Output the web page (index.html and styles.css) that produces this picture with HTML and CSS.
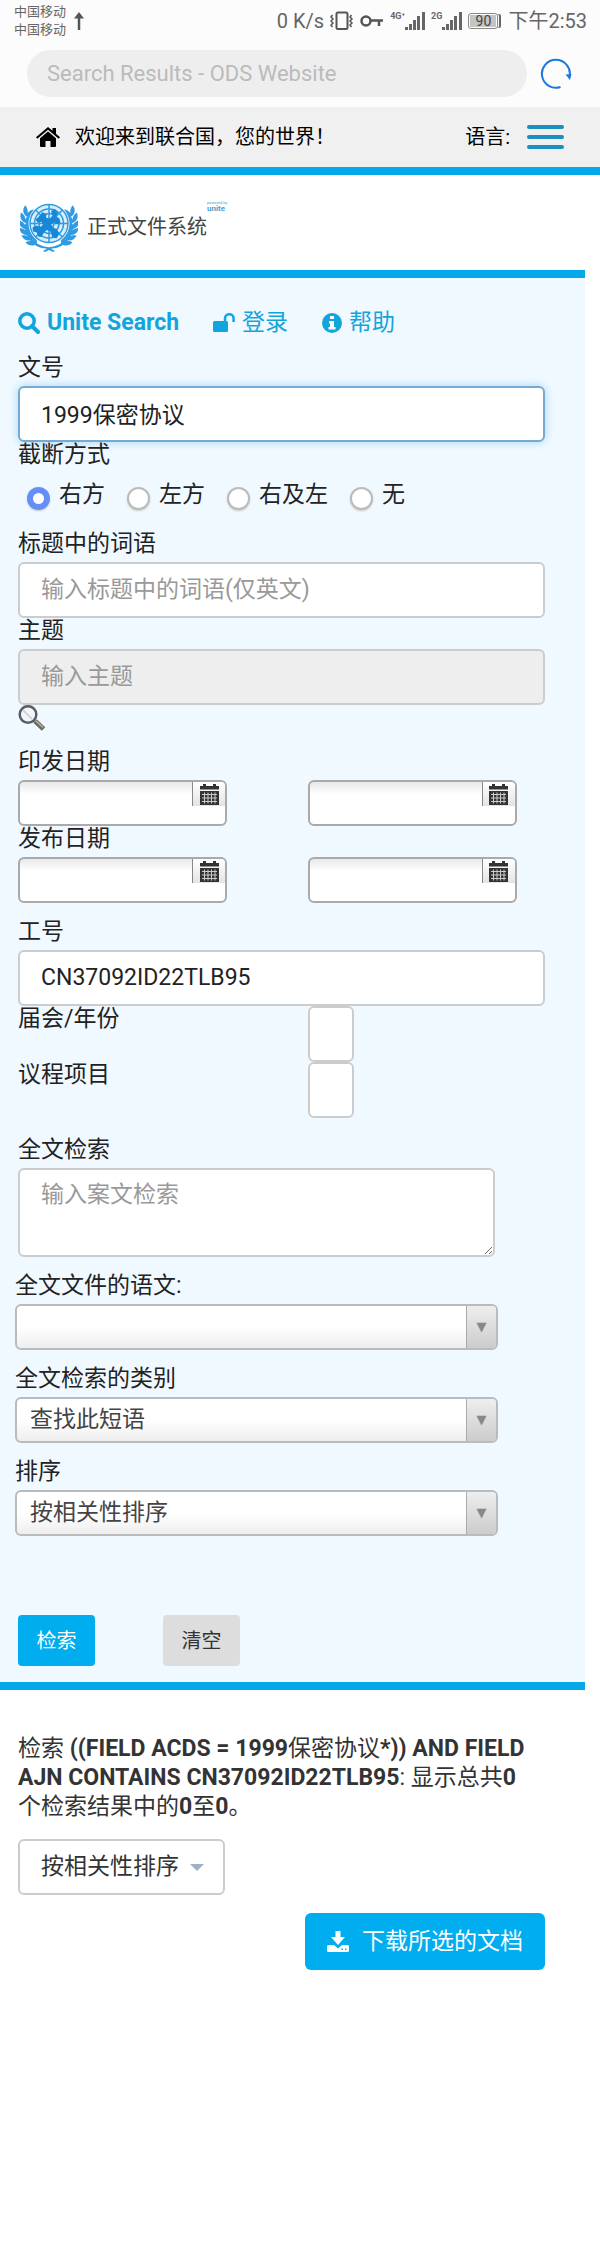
FILE: index.html
```html
<!DOCTYPE html>
<html lang="zh-CN">
<head>
    <meta charset="utf-8">
    <meta name="viewport" content="width=device-width, initial-scale=1">
    <title>Search Results - ODS Website</title>
    <link rel="stylesheet" href="styles.css">
</head>
<body>
    <div class="status-bar">
        <div class="carrier"><span>中国移动</span><span>中国移动</span></div>
        <svg class="up" width="10" height="18" viewBox="0 0 10 18"><path d="M5 18V3" fill="none" stroke="#555" stroke-width="2.500"/><path d="M5 0l5 6.500H0z" fill="#555"/></svg>
        <span class="speed">0 K/s</span>
        <svg width="24" height="20" viewBox="0 0 24 20" fill="none" stroke="#555"><rect x="6.500" y="1.500" width="11" height="16.500" rx="1.500" stroke-width="2"/><path d="M2.500 4l-1.500 2 2 2-2 2 2 2-2 2 1.500 2M21.500 4l-1.500 2 2 2-2 2 2 2-2 2 1.500 2" stroke-width="1.500"/></svg>
        <svg width="24" height="14" viewBox="0 0 24 14" fill="none" stroke="#555" stroke-width="2.500"><circle cx="6" cy="7" r="4.500"/><path d="M10.500 6.500H23M19 7v5"/></svg>
        <div class="signal">
            <span class="net">4G⁺</span>
            <svg width="20" height="18" viewBox="0 0 20 18" fill="#666"><path d="M0 15h3v3H0zM4 12h3v6H4zM8 8h3v10H8zM12 4h3v14h-3zM17 0h3v18h-3z"/></svg>
        </div>
        <div class="signal">
            <span class="net">2G</span>
            <svg width="20" height="18" viewBox="0 0 20 18" fill="#666"><path d="M0 15h3v3H0zM4 12h3v6H4zM8 8h3v10H8zM12 4h3v14h-3zM17 0h3v18h-3z"/></svg>
        </div>
        <div class="battery"><span>90</span></div>
        <span class="time">下午2:53</span>
    </div>

    <div class="address-bar">
        <input class="address" type="text" placeholder="Search Results - ODS Website" aria-label="Address">
        <button class="reload" type="button" aria-label="Reload">
            <svg width="32" height="32" viewBox="0 0 32 32"><path d="M20.500 29A14 14 0 1 1 29.700 18" fill="none" stroke="#1b78dd" stroke-width="2"/><path d="M25.500 16.500l6-.5-1.500 6z" fill="#1b78dd"/></svg>
        </button>
    </div>

    <nav class="top-nav">
        <a class="home" href="#">
            <svg width="24" height="20" viewBox="0 0 24 20"><path d="M12 4.500l8 6.800V19q0 1-1 1h-4.500v-6h-5v6H5q-1 0-1-1v-7.700zM12 0l4.500 3.800V1h3.500v5.800l4 3.400-1.300 1.500L12 2.700 1.300 11.700 0 10.200z"/></svg>
            <span>欢迎来到联合国，您的世界！</span>
        </a>
        <span class="language">语言:</span>
        <button class="menu" type="button" aria-label="Menu"><span></span><span></span><span></span></button>
    </nav>

    <header class="site-header">
        <svg class="emblem" width="58" height="50" viewBox="0 0 116 100">
            <defs>
                <g id="leaf">
                    <path d="M11 47c-10-3-13-11-11-20 8 4 12 11 11 20zM11 47c-2-8 2-16 9-19 2 8-1 15-9 19z"/>
                </g>
                <g id="branch">
                    <use href="#leaf" transform="rotate(22 58 43)"/>
                    <use href="#leaf" transform="rotate(6 58 43)"/>
                    <use href="#leaf" transform="rotate(-9 58 43)"/>
                    <use href="#leaf" transform="rotate(-24 58 43)"/>
                    <use href="#leaf" transform="rotate(-39 58 43)"/>
                    <use href="#leaf" transform="rotate(-54 58 43)"/>
                    <path d="M12 44c1 26 20 44 44 46l14 8-4 2-14-7C28 92 10 72 9 46z"/>
                </g>
            </defs>
            <g fill="#2f9be2">
                <use href="#branch"/>
                <use href="#branch" transform="translate(116 0) scale(-1 1)"/>
            </g>
            <circle cx="58" cy="43" r="41" fill="#fff"/>
            <circle cx="58" cy="43" r="38" fill="#d8eefb"/>
            <g fill="none" stroke="#2f9be2" stroke-width="3">
                <circle cx="58" cy="43" r="38"/>
                <circle cx="58" cy="43" r="29"/>
                <circle cx="58" cy="43" r="20"/>
                <circle cx="58" cy="43" r="10"/>
                <path d="M58 5v76M20 43h76M31 16l54 54M85 16L31 70"/>
            </g>
            <path fill="#1787d8" d="M45 20l8 5-1 6 7 3 6-7-3-9 8-4 6 8-4 7 7 4 2 9-8 2-6-4-5 5 3 7 8 2 6 9-6 10-9-3-2-10-8-4-6 5-5 9-7-1-2-8-8-2-1-8 8-4 8 3 5-5-3-5-8 1-4-6 6-5z"/>
        </svg>
        <span class="site-title">正式文件系统</span>
        <span class="powered"><small>powered by</small><b>unite</b></span>
    </header>

    <form class="search-panel">
        <div class="links">
            <a class="unite" href="#">
                <svg width="22" height="22" viewBox="0 0 22 22" fill="none" stroke="#12a5dc"><circle cx="9" cy="9" r="7.200" stroke-width="3.500"/><path d="M14 14l6 6" stroke-width="4" stroke-linecap="round"/></svg>
                Unite Search
            </a>
            <a class="login" href="#">
                <svg width="22" height="20" viewBox="0 0 22 20"><rect y="8" width="15" height="11" rx="1.500" fill="#12a5dc"/><path d="M12 9V5.500a4.300 4.300 0 0 1 8.600 0V9" fill="none" stroke="#12a5dc" stroke-width="2.500"/></svg>
                登录
            </a>
            <a href="#">
                <svg width="20" height="20" viewBox="0 0 20 20"><circle cx="10" cy="10" r="10" fill="#12a5dc"/><path d="M8 3h4v3H8zM7 8h5v6h1.500v2.500h-7V14H8v-3.500H7z" fill="#fff"/></svg>
                帮助
            </a>
        </div>

        <label class="label" for="symbol">文号</label>
        <input class="text focused" id="symbol" type="text" value="1999保密协议">

        <div class="label" id="truncation">截断方式</div>
        <div class="radios" role="radiogroup" aria-labelledby="truncation">
            <label><input type="radio" name="truncation" checked>右方</label>
            <label><input type="radio" name="truncation">左方</label>
            <label><input type="radio" name="truncation">右及左</label>
            <label><input type="radio" name="truncation">无</label>
        </div>

        <label class="label" for="words">标题中的词语</label>
        <input class="text" id="words" type="text" placeholder="输入标题中的词语(仅英文)">
        <label class="label" for="subject">主题</label>
        <input class="text" id="subject" type="text" placeholder="输入主题" disabled>
        <button class="lookup" type="button" aria-label="查找主题">
            <svg width="28" height="26" viewBox="0 0 28 26"><path d="M17 16l8.500 8" stroke="#6b6b5c" stroke-width="5"/><path d="M18 16l7 6.500" stroke="#b9b49a" stroke-width="1.500"/><circle cx="10" cy="9.500" r="8.300" fill="#f3f5fb" stroke="#5b5d66" stroke-width="2.500"/><path d="M5 5l9 9" stroke="#c9ccd6" stroke-width="1.500"/></svg>
        </button>

        <label class="label" for="pub-from">印发日期</label>
        <div class="dates">
            <div class="date">
                <input id="pub-from" type="text">
                <button type="button" aria-label="选择日期"><svg width="19" height="21" viewBox="0 0 19 21"><use href="#calendar"/></svg></button>
            </div>
            <div class="date">
                <input type="text" aria-label="印发日期至">
                <button type="button" aria-label="选择日期"><svg width="19" height="21" viewBox="0 0 19 21"><use href="#calendar"/></svg></button>
            </div>
        </div>
        <label class="label" for="rel-from">发布日期</label>
        <div class="dates">
            <div class="date">
                <input id="rel-from" type="text">
                <button type="button" aria-label="选择日期"><svg width="19" height="21" viewBox="0 0 19 21"><use href="#calendar"/></svg></button>
            </div>
            <div class="date">
                <input type="text" aria-label="发布日期至">
                <button type="button" aria-label="选择日期"><svg width="19" height="21" viewBox="0 0 19 21"><use href="#calendar"/></svg></button>
            </div>
        </div>

        <label class="label job" for="job">工号</label>
        <input class="text" id="job" type="text" value="CN37092ID22TLB95">
        <div class="short-row">
            <label for="session">届会/年份</label>
            <input class="text" id="session" type="text">
        </div>
        <div class="short-row">
            <label for="agenda">议程项目</label>
            <input class="text" id="agenda" type="text">
        </div>

        <label class="label fulltext" for="fulltext">全文检索</label>
        <textarea class="text" id="fulltext" placeholder="输入案文检索"></textarea>

        <div class="selects">
            <label class="label" for="lang">全文文件的语文:</label>
            <div class="select"><select id="lang"><option></option></select></div>
            <label class="label" for="kind">全文检索的类别</label>
            <div class="select"><select id="kind"><option>查找此短语</option></select></div>
            <label class="label" for="sort">排序</label>
            <div class="select"><select id="sort"><option>按相关性排序</option></select></div>
        </div>

        <div class="actions">
            <button class="search" type="button">检索</button>
            <button class="clear" type="button">清空</button>
        </div>
    </form>

    <main class="results">
        <p>检索 <b>((FIELD ACDS = 1999<span>保密协议</span>*)) AND FIELD AJN CONTAINS CN37092ID22TLB95</b>: 显示总共<b>0</b>个检索结果中的<b>0</b>至<b>0</b>。</p>
        <div class="sort">
            <select aria-label="排序方式"><option>按相关性排序</option></select>
        </div>
        <div class="download-row">
            <button class="download" type="button">
                <svg width="22" height="21" viewBox="0 0 22 21" fill="#fff"><path d="M8.500 0h5v6H18l-7 8-7-8h4.500z"/><path d="M1.500 14H7l4 3.500 4-3.500h5.500q1.500 0 1.500 1.500v4q0 1.500-1.500 1.500h-19Q0 21 0 19.500v-4Q0 14 1.500 14z"/><path d="M14.500 17.500h1.500V19h-1.500zM18 17.500h1.500V19H18z" fill="#00adef"/></svg>
                下载所选的文档
            </button>
        </div>
    </main>

    <svg class="sprite" aria-hidden="true">
        <symbol id="calendar" viewBox="0 0 19 21">
            <path d="M0 2h3V0h3v2h7V0h3v2h3v3.500H0zM0 7h19v14H0z" fill="#333"/>
            <path d="M2 10.500h15M2 14h15M2 17.500h15M4.500 8.500v11M8 8.500v11M11.500 8.500v11M15 8.500v11" stroke="#ccc" stroke-width="1"/>
        </symbol>
    </svg>
</body>
</html>
```

FILE: styles.css
```css
* {
    box-sizing: border-box;
}
body {
    margin: 0;
    background: #fff;
    color: #222;
    font-family: Roboto, "Noto Sans CJK SC", sans-serif;
    font-size: 23px;
    line-height: 26px;
}
input, textarea, select, button {
    font: inherit;
    color: inherit;
    margin: 0;
}
button {
    border: 0;
    padding: 0;
    cursor: pointer;
}
a {
    color: inherit;
    text-decoration: none;
}
.sprite {
    display: none;
}

/* phone status bar and address bar */
.status-bar {
    display: flex;
    align-items: center;
    height: 42px;
    padding: 0 13px 0 14px;
    gap: 6px;
    background: #fcfcfc;
    color: #666;
    font-size: 20px;
}
.carrier {
    display: flex;
    flex-direction: column;
    font-size: 13px;
    line-height: 18px;
}
.up {
    margin-left: 2px;
}
.speed {
    margin-left: auto;
}
.signal {
    display: flex;
    align-items: flex-end;
}
.net {
    align-self: flex-start;
    font-size: 9px;
    font-weight: 700;
    line-height: 9px;
}
.battery {
    width: 30px;
    height: 16px;
    padding: 1px;
    border: 1px solid #888;
    border-radius: 3px;
    font-size: 14px;
    line-height: 12px;
    text-align: center;
    box-shadow: 2px 0 0 -1px #fcfcfc, 4px 0 0 -1px #666;
}
.battery span {
    display: block;
    background: #c4c4c4;
    color: #444;
}
.time {
    margin-left: 4px;
}
.address-bar {
    display: flex;
    align-items: center;
    gap: 13px;
    height: 65px;
    padding: 8px 28px 10px 27px;
    background: #fcfcfc;
}
.address {
    flex: 1;
    min-width: 0;
    height: 47px;
    padding: 0 20px;
    border: 0;
    border-radius: 24px;
    background: #eee;
    font-size: 22px;
}
.address::placeholder {
    color: #bbb;
}
.reload {
    display: flex;
    background: none;
}

/* site header */
.top-nav {
    display: flex;
    align-items: center;
    height: 68px;
    padding: 0 36px;
    background: #f0f0f0;
    border-bottom: 8px solid #05a9ea;
    color: #000;
    font-size: 20px;
}
.home {
    display: flex;
    align-items: center;
    gap: 15px;
}
.language {
    margin-left: auto;
}
.menu {
    display: flex;
    flex-direction: column;
    gap: 6px;
    width: 37px;
    margin-left: 17px;
    background: none;
}
.menu span {
    height: 4px;
    border-radius: 2px;
    background: #1a8fc0;
}
.site-header {
    display: flex;
    align-items: center;
    height: 103px;
    margin-right: 15px;
    padding: 8px 20px 0;
    border-bottom: 8px solid #05a9ea;
}
.site-title {
    margin-left: 9px;
    color: #444;
    font-size: 20px;
}
.powered {
    display: flex;
    flex-direction: column;
    align-self: flex-start;
    margin-top: 18px;
    color: #4a9fd0;
    font-size: 8px;
    line-height: 8px;
}
.powered small {
    font-size: 4px;
    line-height: 4px;
}

/* search form */
.search-panel {
    margin-right: 15px;
    padding: 31px 40px 16px 18px;
    background: #f0f9ff;
    border-bottom: 8px solid #05a9ea;
}
.links {
    display: flex;
    gap: 34px;
    margin-bottom: 18px;
    color: #12a5dc;
    line-height: 28px;
}
.links a {
    display: flex;
    align-items: center;
    gap: 7px;
}
.unite {
    font-weight: 700;
}
.label {
    display: block;
    margin-bottom: 5px;
}
.text {
    display: block;
    width: 100%;
    height: 56px;
    padding: 0 21px 2px;
    border: 2px solid #ccc;
    border-radius: 6px;
    background: #fff;
    outline: 0;
}
.text::placeholder {
    color: #999;
}
.text:disabled {
    background: #eee;
}
.text.focused {
    border-color: #75aad3;
    box-shadow: 0 0 10px #a3d4f5;
}
.radios {
    display: flex;
    gap: 22px;
    margin: 14px 0 21px 9px;
}
.radios label {
    display: flex;
    gap: 9px;
    height: 28px;
}
.radios input {
    appearance: none;
    width: 23px;
    height: 23px;
    margin-top: 5px;
    border: 2px solid #bbb;
    border-radius: 50%;
    background: #fff;
    box-shadow: 0 1px 2px #ccc;
}
.radios input:checked {
    border: 6px solid #648ff5;
}
.lookup {
    display: block;
    height: 26px;
    margin-bottom: 18px;
    background: none;
}
.dates, .short-row {
    display: grid;
    grid-template-columns: 55% 45%;
}
.date {
    display: flex;
    width: 209px;
    height: 46px;
    border: 2px solid #aaa;
    border-radius: 6px;
    background: linear-gradient(#e8e8e8, #fff 12px);
    overflow: hidden;
}
.date input {
    flex: 1;
    min-width: 0;
    border: 0;
    padding: 0 8px;
    background: none;
    outline: 0;
}
.date button {
    width: 33px;
    height: 24px;
    border-left: 1px solid #888;
    background: linear-gradient(#fff, #e4e4e4);
}
.date svg {
    display: block;
    margin: 0 auto;
}
.job {
    margin-top: 16px;
}
.short-row .text {
    width: 46px;
    padding: 0 6px;
}
.fulltext {
    margin-top: 19px;
}
textarea.text {
    width: 477px;
    max-width: 100%;
    height: 89px;
    padding: 12px 21px;
}

.selects {
    max-width: 483px;
    margin: 0 0 79px -3px;
}
.selects .label {
    margin-top: 16px;
}
.select {
    position: relative;
}
.select select {
    display: block;
    appearance: none;
    width: 100%;
    height: 46px;
    padding: 0 40px 0 13px;
    border: 2px solid #bbb;
    border-radius: 6px;
    background: linear-gradient(#fff 50%, #eee);
    color: #444;
}
.select::after {
    content: "▼";
    position: absolute;
    top: 2px;
    right: 2px;
    bottom: 2px;
    width: 29px;
    border-left: 1px solid #aaa;
    border-radius: 0 4px 4px 0;
    background: linear-gradient(#eee, #ccc);
    color: #888;
    font-family: "DejaVu Sans", sans-serif;
    font-size: 13px;
    line-height: 42px;
    text-align: center;
    pointer-events: none;
}
.actions {
    display: flex;
    gap: 68px;
}
.actions button {
    width: 77px;
    height: 51px;
    border-radius: 4px;
    font-size: 20px;
}
.search {
    background: #00adef;
    color: #fff;
}
.clear {
    background: #ddd;
    color: #333;
}

/* results */
.results {
    margin-right: 15px;
    padding: 44px 40px 44px 18px;
    color: #333;
}
.results p {
    margin: 0 0 18px;
    padding-right: 10px;
    line-height: 29px;
}
.results p span {
    font-weight: 400;
}
.sort {
    position: relative;
    width: 207px;
}
.sort select {
    display: block;
    appearance: none;
    width: 100%;
    height: 56px;
    padding: 0 21px;
    border: 2px solid #ccc;
    border-radius: 6px;
    background: #fff;
}
.sort::after {
    content: "";
    position: absolute;
    top: 25px;
    right: 21px;
    border: 7px solid transparent;
    border-top-color: #9fb1c1;
    pointer-events: none;
}
.download-row {
    display: flex;
    justify-content: flex-end;
    margin-top: 18px;
}
.download {
    display: flex;
    align-items: center;
    gap: 13px;
    height: 57px;
    padding: 0 22px;
    border-radius: 6px;
    background: #00adef;
    color: #fff;
}
```
